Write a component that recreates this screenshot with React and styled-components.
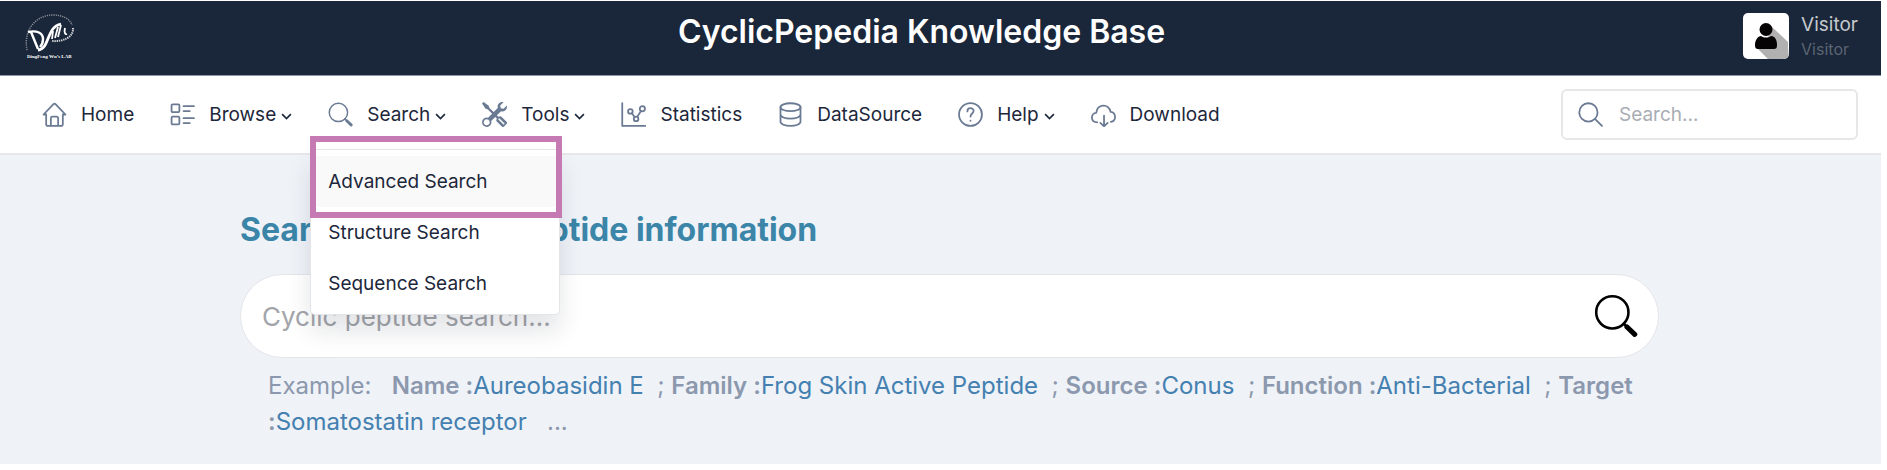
import React from "react";
import styled, { createGlobalStyle } from "styled-components";
import { BsTools } from "react-icons/bs";

const GlobalStyle = createGlobalStyle`
  * {
    box-sizing: border-box;
  }

  body {
    margin: 0;
    background: #ffffff;
    color: #1d273b;
    font-family: Inter, "Liberation Sans", sans-serif;
  }
`;

const Page = styled.div`
  margin: 1px 6px 6px 0;
`;

const Header = styled.header`
  display: flex;
  align-items: flex-start;
  padding: 12px 23px 14px 24px;
  background: #1a2639;
  border-bottom: 1px solid #8f98ab;
`;

const Brand = styled.h1`
  flex: 1;
  margin: 0;
  padding-left: 22px;
  text-align: center;
  color: #ffffff;
  font-size: 32px;
  line-height: 38px;
  font-weight: 600;
`;

const User = styled.a`
  display: flex;
  gap: 12px;
  text-decoration: none;
`;

const Avatar = styled.svg`
  width: 46px;
  height: 46px;
  border-radius: 5px;
  background: #ffffff;
`;

const UserName = styled.div`
  color: #c6c9ce;
  font-size: 19px;
  line-height: 24px;
`;

const UserRole = styled.div`
  color: #5a6473;
  font-size: 16px;
  line-height: 24px;
`;

const Navbar = styled.nav`
  display: flex;
  align-items: center;
  justify-content: space-between;
  padding: 13px 23px 13px 42px;
  background: #ffffff;
  border-bottom: 2px solid #e6e7e9;
`;

const NavList = styled.ul`
  display: flex;
  gap: 36px;
  margin: 0;
  padding: 0;
  list-style: none;
`;

const NavItem = styled.li`
  position: relative;
`;

const NavLink = styled.a`
  display: flex;
  align-items: center;
  color: inherit;
  font-size: 19px;
  line-height: 28px;
  text-decoration: none;
`;

const NavIcon = styled.span`
  display: flex;
  margin-right: 14px;
  color: #6b7a93;

  svg {
    width: 25px;
    height: 25px;
  }
`;

const Chevron = styled.svg`
  width: 11px;
  height: 11px;
  margin: 3px 0 0 5px;
`;

const Menu = styled.ul`
  position: absolute;
  top: 48px;
  left: -18px;
  z-index: 2;
  width: 250px;
  margin: 0;
  padding: 6px 0 5px;
  list-style: none;
  background: #ffffff;
  border: 1px solid #e3e5e8;
  border-radius: 5px;
  box-shadow: 0 16px 24px rgba(30, 41, 59, 0.12);
`;

const MenuLink = styled.a`
  display: block;
  padding: 0 17px;
  background: ${props => (props.$active ? "#f9f9f9" : "transparent")};
  color: inherit;
  font-size: 19px;
  line-height: 51px;
  text-decoration: none;
`;

const Highlight = styled.li`
  position: absolute;
  top: -14px;
  left: -1px;
  width: 252px;
  height: 82px;
  border: 6px solid #c57ab4;
  pointer-events: none;
`;

const SearchBox = styled.label`
  display: flex;
  align-items: center;
  gap: 16px;
  width: 297px;
  padding: 0 15px;
  border: 2px solid #e6e7e9;
  border-radius: 6px;
  color: #6b7a93;

  svg {
    flex: none;
    width: 25px;
    height: 25px;
  }
`;

const SearchInput = styled.input`
  flex: 1;
  min-width: 0;
  height: 47px;
  padding: 0;
  border: 0;
  outline: 0;
  background: transparent;
  font: inherit;
  font-size: 19px;

  &::placeholder {
    color: #a9adb4;
    opacity: 1;
  }
`;

const Main = styled.main`
  padding: 54px 222px 24px 240px;
  background: #eff2f7;
`;

const Heading = styled.h2`
  margin: 0 0 23px;
  color: #3a85a8;
  font-size: 32px;
  line-height: 42px;
  font-weight: 700;
`;

const BigSearch = styled.form`
  display: flex;
  align-items: center;
  padding: 0 20px 0 21px;
  background: #ffffff;
  border: 1px solid #e4e6ea;
  border-radius: 42px;
`;

const BigInput = styled.input`
  flex: 1;
  height: 82px;
  padding: 0;
  border: 0;
  outline: 0;
  background: transparent;
  font: inherit;
  font-size: 26px;

  &::placeholder {
    color: #a3a5aa;
    opacity: 1;
  }
`;

const BigButton = styled.button`
  display: flex;
  padding: 0;
  border: 0;
  background: transparent;
  color: #000000;

  svg {
    width: 44px;
    height: 44px;
  }
`;

const Examples = styled.p`
  margin: 10px 0 0;
  padding: 0 20px 0 28px;
  color: #8b98ad;
  font-size: 24px;
  line-height: 36px;
`;

const Term = styled.strong`
  font-weight: 600;
`;

const ExampleLink = styled.a`
  color: #4480b0;
  text-decoration: none;
`;

const Logo = () => (
  <svg width="54" height="47" viewBox="0 0 54 47" fill="none" stroke="#fff" role="img" aria-label="DingFeng Wu's Lab">
    <path d="M3 37C-1 17 12 2 29 2c10 0 17 4 19 10" strokeWidth="1.4" strokeDasharray="1.2 1" opacity=".5" />
    <path d="M49 15c1 9-10 14-21 13" strokeWidth="2" strokeDasharray="1.4 .8" opacity=".8" />
    <path d="M4 19c9-2 15 1 15 7 0 4-1 6-3 8" strokeWidth="2.4" />
    <path d="M7 19l7 17" strokeWidth="2.4" />
    <path d="M14 37c12-1 8-23 23-26" strokeWidth="2.8" />
    <path d="M29 18l-1 8M34 14l-3 11M37 12l-3 12M41 15c-1 4 0 7 2 6" strokeWidth="1.8" />
    <text x="3" y="45" fill="#fff" stroke="none" fontFamily="Liberation Serif" fontWeight="700" fontSize="5">DingFeng Wu’s LAB</text>
  </svg>
);

const Line = ({ children, ...rest }) => (
  <svg viewBox="0 0 24 24" fill="none" stroke="currentColor" strokeWidth="1.7" strokeLinecap="round" strokeLinejoin="round" aria-hidden="true" {...rest}>
    {children}
  </svg>
);

const HomeIcon = () => (
  <Line>
    <path d="M4 12H1.500L10.800 2.200a1.700 1.700 0 0 1 2.400 0L22.500 12H20v9a2 2 0 0 1-2 2H6a2 2 0 0 1-2-2zM8.500 23v-7.500A1.500 1.500 0 0 1 10 14h4a1.500 1.500 0 0 1 1.500 1.500V23" />
  </Line>
);

const BrowseIcon = () => (
  <Line>
    <rect x="1.500" y="2.200" width="7.500" height="7.500" rx="1" />
    <rect x="1.500" y="14" width="7.500" height="7.500" rx="1" />
    <path d="M13 4h10M13 8.700h6M13 15.500h10M13 20.200h6" />
  </Line>
);

const SearchIcon = () => (
  <Line strokeWidth="1.4">
    <circle cx="10" cy="10" r="8.800" />
    <path d="M16.200 16.200l1.800 1.800" />
    <path d="M18 18l4.200 4" strokeWidth="2.800" />
  </Line>
);

const ThinSearchIcon = () => (
  <Line>
    <circle cx="10" cy="10" r="8.800" />
    <path d="M16.500 16.500l6.500 6.500" />
  </Line>
);

const StatsIcon = () => (
  <Line>
    <path d="M1.200 1v22H23.500" />
    <circle cx="9" cy="9" r="2.200" />
    <circle cx="14.500" cy="16.200" r="2.200" />
    <circle cx="20.500" cy="6.500" r="2.500" />
    <path d="M10.400 10.800l2.700 3.600M15.600 14.200l3.600-5.500" />
  </Line>
);

const DataIcon = () => (
  <Line>
    <ellipse cx="12" cy="5" rx="9.600" ry="3.800" />
    <path d="M2.400 5v14c0 2.200 4.300 4 9.600 4s9.600-1.800 9.600-4V5M2.400 12c0 2.200 4.300 4 9.600 4s9.600-1.800 9.600-4" />
  </Line>
);

const HelpIcon = () => (
  <Line>
    <circle cx="12" cy="12" r="11" />
    <path d="M9 9c0-4 6-4 6-.3 0 2.500-3 2.300-3 5.300M12 17.800v.2" />
  </Line>
);

const DownloadIcon = () => (
  <Line>
    <path d="M6 19.500C-.8 19.200-.5 11 5 10.500 6 1.500 17 1 18.800 9.500c5.600.5 5.700 9 .2 9.500M12.500 13v10.300M9 20l3.500 3.300L16 20" />
  </Line>
);

const navItems = [
  { label: "Home", icon: <HomeIcon /> },
  { label: "Browse", icon: <BrowseIcon />, more: true },
  { label: "Search", icon: <SearchIcon />, more: true, menu: true },
  { label: "Tools", icon: <BsTools />, more: true },
  { label: "Statistics", icon: <StatsIcon /> },
  { label: "DataSource", icon: <DataIcon /> },
  { label: "Help", icon: <HelpIcon />, more: true },
  { label: "Download", icon: <DownloadIcon /> }
];

const examples = [
  ["Name", "Aureobasidin E"],
  ["Family", "Frog Skin Active Peptide"],
  ["Source", "Conus"],
  ["Function", "Anti-Bacterial"],
  ["Target", "Somatostatin receptor"]
];

const SearchMenu = () => (
  <Menu>
    <li>
      <MenuLink href="#advanced" $active>Advanced Search</MenuLink>
    </li>
    <li>
      <MenuLink href="#structure">Structure Search</MenuLink>
    </li>
    <li>
      <MenuLink href="#sequence">Sequence Search</MenuLink>
    </li>
    <Highlight aria-hidden="true" />
  </Menu>
);

export default () => {
  return (
    <Page>
      <GlobalStyle />
      <Header>
        <Logo />
        <Brand>CyclicPepedia Knowledge Base</Brand>
        <User href="#user">
          <Avatar viewBox="0 0 46 46" aria-hidden="true">
            <path d="M28 13l17 16v5l1 12H25L13 34l12-9z" fill="#b1b1b1" />
            <circle cx="23" cy="16.500" r="6.500" fill="#050303" />
            <path d="M12 32c0-5 3-9 6-9 3 2 7 2 10 0 4 0 6 4 6 9 0 3-1 4-3 4H15c-2 0-3-1-3-4z" fill="#050303" />
          </Avatar>
          <div>
            <UserName>Visitor</UserName>
            <UserRole>Visitor</UserRole>
          </div>
        </User>
      </Header>
      <Navbar>
        <NavList>
          {navItems.map(item => (
            <NavItem key={item.label}>
              <NavLink href={"#" + item.label.toLowerCase()}>
                <NavIcon>{item.icon}</NavIcon>
                {item.label}
                {item.more && (
                  <Chevron viewBox="0 0 12 12" fill="none" stroke="currentColor" strokeWidth="1.800">
                    <path d="M1.200 3.500L6 8.300l4.800-4.800" />
                  </Chevron>
                )}
              </NavLink>
              {item.menu && <SearchMenu />}
            </NavItem>
          ))}
        </NavList>
        <SearchBox>
          <ThinSearchIcon />
          <SearchInput type="search" placeholder="Search..." aria-label="Search" />
        </SearchBox>
      </Navbar>
      <Main>
        <Heading>Search for cyclic peptide information</Heading>
        <BigSearch>
          <BigInput type="text" placeholder="Cyclic peptide search..." aria-label="Cyclic peptide search" />
          <BigButton type="button" aria-label="Search">
            <SearchIcon />
          </BigButton>
        </BigSearch>
        <Examples>
          Example: &nbsp;{" "}
          {examples.map(([term, value], i) => (
            <React.Fragment key={term}>
              {i > 0 && <>&nbsp; ; </>}
              <Term>{term} :</Term>
              <ExampleLink href={"#" + term.toLowerCase()}>{value}</ExampleLink>
            </React.Fragment>
          ))}
          &nbsp; &nbsp;...
        </Examples>
      </Main>
    </Page>
  );
};
